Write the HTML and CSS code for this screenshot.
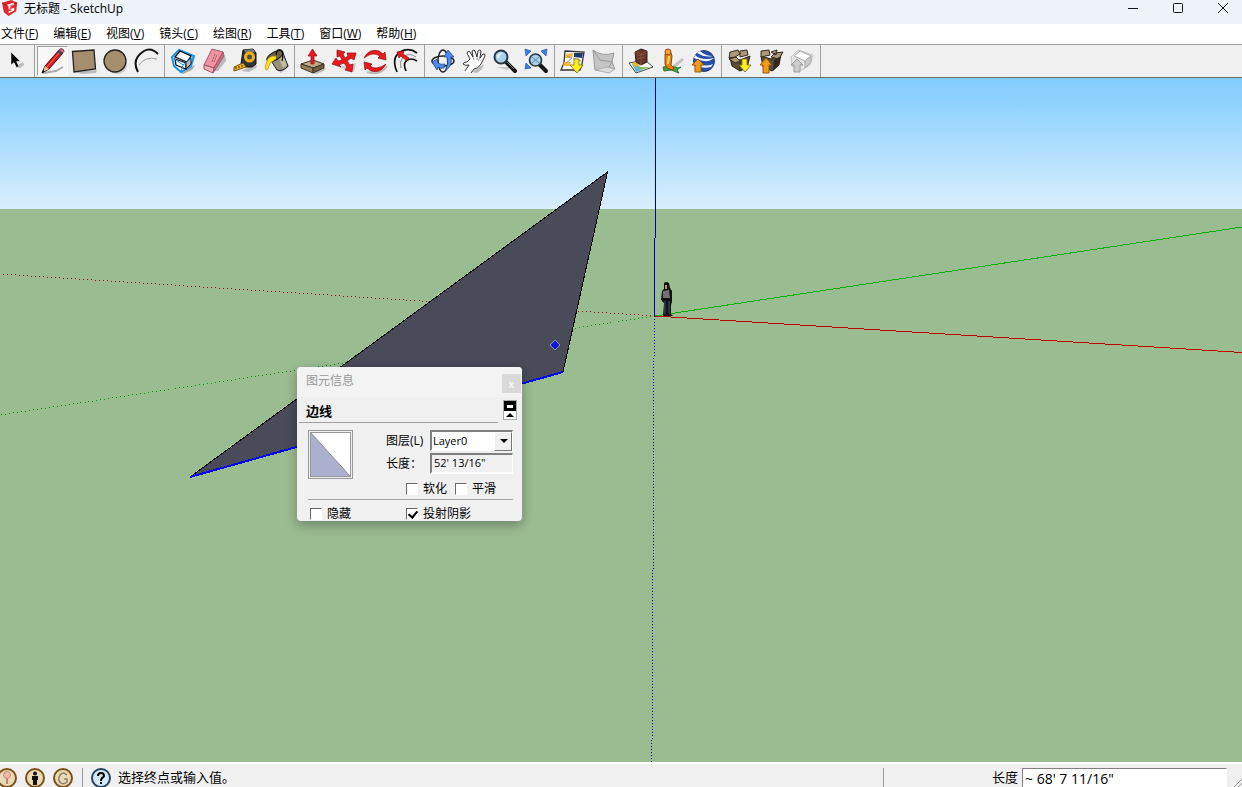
FILE: index.html
```html
<!DOCTYPE html>
<html lang="zh-CN">
<head>
    <meta charset="UTF-8">
    <meta name="viewport" content="width=device-width, initial-scale=1.0">
    <title>无标题 - SketchUp</title>
    <link rel="stylesheet" href="styles.css">
</head>
<body>
    <div class="app">
        <header class="title-bar">
            <svg class="logo" viewBox="0 0 18 18">
                <path d="M0 3L10 0L16 3L15 12L7 17L2 13Z" fill="#e5252a"/>
                <path d="M0 3L6 6L16 3" fill="none" stroke="#b80f18"/>
                <path d="M5 5L12 3L13 5L9 7V9L13 8V11L7 14V12L10 11V10L7 10V7Z" fill="#fff"/>
                <path d="M9 6L12 5M8 9L12 8" fill="none" stroke="#e5252a"/>
            </svg>
            <h1>无标题 - SketchUp</h1>
            <div class="window-buttons">
                <button aria-label="最小化"><svg viewBox="0 0 12 12"><path d="M1 6.5H11"/></svg></button>
                <button aria-label="最大化"><svg viewBox="0 0 12 12"><rect x="1.5" y="1.5" width="9" height="9" rx="1"/></svg></button>
                <button aria-label="关闭"><svg viewBox="0 0 12 12"><path d="M1 1L11 11M11 1L1 11"/></svg></button>
            </div>
        </header>

        <nav class="menu-bar">
            <button>文件(<u>F</u>)</button>
            <button>编辑(<u>E</u>)</button>
            <button>视图(<u>V</u>)</button>
            <button>镜头(<u>C</u>)</button>
            <button>绘图(<u>R</u>)</button>
            <button>工具(<u>T</u>)</button>
            <button>窗口(<u>W</u>)</button>
            <button>帮助(<u>H</u>)</button>
        </nav>

        <div class="toolbar">
            <div class="tool-group">
                <button aria-label="选择"><svg viewBox="0 0 28 28">
                    <path d="M13 20L21 15L22 18L18 21Z" fill="#bbb"/>
                    <path d="M9 5V18L12 15.500L14.500 20.500L17 19.500L14.500 14.500H18.500Z" fill="#000" stroke="#fff" stroke-width=".5"/>
                </svg></button>
            </div>
            <div class="tool-group">
                <button class="active" aria-label="线条"><svg viewBox="0 0 28 28">
                    <path d="M4 26L17 24L24 20" fill="none" stroke="#aaa" stroke-width="2"/>
                    <path d="M3 26L6 19L20 3L24 6L10 22Z" fill="#e3171b" stroke="#401010"/>
                    <path d="M6 19L10 22L4 25Z" fill="#e8c48e"/>
                    <path d="M8 20L21 5" stroke="#ff7770"/>
                    <path d="M18 5L22 8L23.500 6L20 3Z" fill="#446"/>
                    <path d="M20 3L22 1.500Q25 2 25 4.500L23.500 6Z" fill="#e86d91" stroke="#733"/>
                    <path d="M3 26L4 23L6 24.500Z" fill="#000"/>
                </svg></button>
                <button aria-label="矩形"><svg viewBox="0 0 28 28">
                    <path d="M5 25L27 23L26 26L12 27Z" fill="#bbb"/>
                    <path d="M2.500 4.500L24 3L25.500 22L4 25Z" fill="#a58e6e" stroke="#222" stroke-width="1.3"/>
                </svg></button>
                <button aria-label="圆"><svg viewBox="0 0 28 28">
                    <ellipse cx="16" cy="18" rx="10" ry="9" fill="#c8c8c8"/>
                    <circle cx="14" cy="14" r="11" fill="#a58e6e" stroke="#222" stroke-width="1.3"/>
                </svg></button>
                <button aria-label="圆弧"><svg viewBox="0 0 28 28">
                    <path d="M7 18Q13 9 25 12" fill="none" stroke="#999"/>
                    <path d="M6 25Q-1 12 12 4Q19 0 26 7" fill="none" stroke="#111" stroke-width="2"/>
                </svg></button>
            </div>
            <div class="tool-group">
                <button aria-label="制作组件"><svg viewBox="0 0 28 28">
                    <path d="M10 25L26 18L23 23L14 27Z" fill="#aaa"/>
                    <path d="M10 3L25 9L22 19L12 25L5 19L3 10Z" fill="#fff" stroke="#1692eb" stroke-width="2"/>
                    <path d="M6 10L11 4L22 9L18 15Z" fill="#fff" stroke="#111" stroke-width="1.300"/>
                    <path d="M6 12L17 16V22L7 18Z" fill="#fff" stroke="#111" stroke-width="1.300"/>
                    <path d="M17 16L22 11V17L17 22Z" fill="#bbb" stroke="#111"/>
                    <path d="M3 10L14 18L25 9M14 18L12 25" fill="none" stroke="#1692eb"/>
                </svg></button>
                <button aria-label="擦除"><svg viewBox="0 0 28 28">
                    <path d="M13 24L25 8L26 14L18 24Z" fill="#bbb"/>
                    <path d="M12 2L23 5L14 21L4 18Z" fill="#f193a0" stroke="#9c5762"/>
                    <path d="M4 18L14 21L13 26L4 22Z" fill="#f7b0b8" stroke="#9c5762"/>
                    <path d="M14 21L23 5L24 9L13 26Z" fill="#cf707f" stroke="#9c5762"/>
                    <path d="M15 7L12 15M17 8L14 15" stroke="#a85260" stroke-dasharray="2 1"/>
                </svg></button>
                <button aria-label="卷尺"><svg viewBox="0 0 28 28">
                    <path d="M10 24L25 17L26 20L18 25Z" fill="#bbb"/>
                    <path d="M12 3L22 2L25 6V17L21 20H12L10 17Z" fill="#333" stroke="#111"/>
                    <path d="M13 3L22 2L24 5L15 6Z" fill="#777"/>
                    <circle cx="18.500" cy="10" r="4" fill="#4d4d4d" stroke="#f5ae13" stroke-width="3"/>
                    <path d="M12 16L3 20V24L15 20Z" fill="#f9b91d" stroke="#745010"/>
                    <path d="M5 20V22M8 19V21M11 18V20" stroke="#222"/>
                </svg></button>
                <button aria-label="颜料桶"><svg viewBox="0 0 28 28">
                    <path d="M14 23L26 16L27 20L19 26Z" fill="#bbb"/>
                    <path d="M8 12L21 6L26 19Q21 25 15 23Z" fill="#989078" stroke="#222"/>
                    <path d="M20 7L25 18L21 21L16 9Z" fill="#c3bda7"/>
                    <ellipse cx="13" cy="9" rx="9" ry="4" transform="rotate(-28 13 9)" fill="#6c6246" stroke="#171717"/>
                    <path d="M14 9Q6 9 5 14L3 20Q4 25 6 22L8 16L14 12Z" fill="#ffe216" stroke="#a18713" stroke-width=".6"/>
                    <path d="M14 8Q15 1 19 3Q22 6 20 14" fill="none" stroke="#111" stroke-width="1.3"/>
                </svg></button>
            </div>
            <div class="tool-group">
                <button aria-label="推/拉"><svg viewBox="0 0 28 28">
                    <path d="M14 26L27 21L25 24L17 27Z" fill="#bbb"/>
                    <path d="M2 17L14 13L25 17L14 21Z" fill="#bda884" stroke="#3c3324"/>
                    <path d="M2 17V21L14 26V21Z" fill="#967f5c" stroke="#3c3324"/>
                    <path d="M14 21L25 17V21L14 26Z" fill="#6d5b41" stroke="#3c3324"/>
                    <path d="M13.500 2L18 9H15V17H12V9H9Z" fill="#ed171c" stroke="#8a1014" stroke-width=".7"/>
                </svg></button>
                <button aria-label="移动"><svg viewBox="0 0 28 28">
                    <path d="M9 20L26 16L24 25Z" fill="#c9c9c9"/>
                    <path d="M7 3L15 5L13 7L15 11L18 9L17 6L26 6L24 13L21 11L17 14L20 18L23 17L22 25L15 23L17 20L14 16L9 18L11 20L2 17L6 11L8 14L12 13L10 9L7 10Z" fill="#ed171c" stroke="#851014" stroke-width=".7"/>
                </svg></button>
                <button aria-label="旋转"><svg viewBox="0 0 28 28">
                    <path d="M6 25Q20 29 26 19" fill="none" stroke="#bbb" stroke-width="2"/>
                    <path d="M3 11Q8 1 18 4L22 7L24 5L25 13L17 11L19 9Q12 4 3 11ZM25 17Q20 27 10 24L6 21L4 23L3 15L11 17L9 19Q15 24 25 17Z" fill="#ed171c" stroke="#851014" stroke-width=".7"/>
                </svg></button>
                <button aria-label="偏移"><svg viewBox="0 0 28 28">
                    <path d="M5 25Q-1 11 8 5Q17 0 25 6M14 24Q11 17 14 14Q19 10 25 14" fill="none" stroke="#111" stroke-width="1.700"/>
                    <path d="M9 21Q7 15 11 10Q17 5 24 10" fill="none" stroke="#888"/>
                    <path d="M5 5L12 4L11 7L17 11L15 14L9 9L7 11Z" fill="#ed171c" stroke="#851014" stroke-width=".7"/>
                </svg></button>
            </div>
            <div class="tool-group">
                <button aria-label="环绕观察"><svg viewBox="0 0 28 28">
                    <ellipse cx="14" cy="14" rx="11" ry="5" fill="none" stroke="#222" stroke-width="1.500"/>
                    <ellipse cx="14" cy="14" rx="5" ry="11" fill="none" stroke="#222" stroke-width="1.500"/>
                    <path d="M3 15L8 12L9 16Q12 18 16 17L15 21Q11 22 9 20L8 23ZM19 3L25 10L22 10Q24 19 16 24Q20 17 18 10L15 10Z" fill="#4b8cf0" stroke="#183b80" stroke-width=".7"/>
                </svg></button>
                <button aria-label="平移"><svg viewBox="0 0 28 28">
                    <path d="M12 25L24 17L22 22L17 26Z" fill="#bbb"/>
                    <path d="M5 24L9 18Q5 19 3 17Q3 15 7 15L10 12L7 6Q8 3 10 5L13 10L12 4Q14 2 15 4L17 10L18 4Q20 2 21 4L20 11L23 7Q25 6 25 9L21 17Q18 22 14 22L11 26" fill="#fff" stroke="#333"/>
                    <path d="M13 10L14 13M17 10V13M20 11L18 14" stroke="#999"/>
                </svg></button>
                <button aria-label="缩放"><svg viewBox="0 0 28 28">
                    <path d="M5 20L20 20L17 23Z" fill="#c8c8c8"/>
                    <path d="M15 15L24 24" stroke="#171717" stroke-width="4" stroke-linecap="round"/>
                    <path d="M16 15L23 22" stroke="#777"/>
                    <circle cx="10" cy="10" r="6.500" fill="#a9d1eb" stroke="#273845" stroke-width="2"/>
                    <path d="M6 9Q8 5 12 6Q9 8 7 12Z" fill="#e3f5ff"/>
                </svg></button>
                <button aria-label="充满视窗"><svg viewBox="0 0 28 28">
                    <path d="M3 2L9 4L4 9ZM25 2L19 4L24 9ZM3 22L4 16L9 21Z" fill="#397ee8" stroke="#2458ad" stroke-width=".7"/>
                    <path d="M18 18L24 24" stroke="#171717" stroke-width="4" stroke-linecap="round"/>
                    <circle cx="13.500" cy="13" r="6" fill="#a9d1eb" stroke="#273845" stroke-width="1.700"/>
                    <path d="M10 10L17 16M17 10L10 16" stroke="#6588a0"/>
                </svg></button>
            </div>
            <div class="tool-group">
                <button aria-label="添加位置"><svg viewBox="0 0 28 28">
                    <path d="M6 4L25 5L23 17L21 23L2 23L5 16Z" fill="#fff" stroke="#333" stroke-width="1.300"/>
                    <path d="M7 7L14 6L13 11L6 11ZM5 15L12 15L11 19L4 19Z" fill="#f1b936"/>
                    <path d="M15 6L24 6L23 11L15 10Z" fill="#1b3870"/>
                    <path d="M8 9L13 11L7 16M14 11L22 14" fill="none" stroke="#9b9b9b"/>
                    <path d="M15 12H20V18H24L18 26L11 18H15Z" fill="#fff01b" stroke="#756b10" stroke-width=".8"/>
                </svg></button>
                <button aria-label="切换地形"><svg viewBox="0 0 28 28">
                    <path d="M3 3Q12 10 24 6L22 15L25 22L5 23Z" fill="#c5c5c5" stroke="#999"/>
                    <path d="M3 3L10 13L22 15L17 23L5 23" fill="none" stroke="#999"/>
                    <path d="M5 23L17 20L25 22L19 26Z" fill="#ddd" stroke="#aaa"/>
                </svg></button>
            </div>
            <div class="tool-group">
                <button aria-label="照片纹理"><svg viewBox="0 0 28 28">
                    <path d="M2 16L18 13L26 20L9 26Z" fill="#f8f8f8" stroke="#444"/>
                    <path d="M5 17L10 16L15 23L9 25Z" fill="#55b6d9"/>
                    <path d="M12 20L23 20L14 23Z" fill="#8bc33f"/>
                    <path d="M5 16L10 15L13 19L7 20Z" fill="#e3b632"/>
                    <path d="M8 5L14 2L20 4V15L14 18L9 15Z" fill="#673429" stroke="#372018"/>
                    <path d="M8 5L14 7L20 4M14 7V18M10 9L18 7M10 12L18 10" fill="none" stroke="#85503f"/>
                </svg></button>
                <button aria-label="街景"><svg viewBox="0 0 28 28">
                    <path d="M14 19L24 11L26 13L17 21Z" fill="#c2c2c2"/>
                    <path d="M5 20L13 19L20 21L23 20L19 23L21 26L13 23L6 24Z" fill="#45a23e" stroke="#2d7530"/>
                    <path d="M7 7L13 6L14 9L13 18L16 21L15 23L9 21L7 17Z" fill="#e7840e" stroke="#8d480a"/>
                    <circle cx="10" cy="5" r="3" fill="#f5a433" stroke="#8d480a"/>
                    <path d="M11 9L10 17" stroke="#ffd074" stroke-width="2"/>
                </svg></button>
                <button aria-label="在地球中预览"><svg viewBox="0 0 28 28">
                    <circle cx="15" cy="14" r="10.500" fill="#254fa8" stroke="#234179"/>
                    <path d="M6 8Q12 14 25 11Q20 16 10 13L5 11ZM11 4Q16 9 24 9Q16 11 8 6ZM6 15Q15 21 24 17L22 20Q13 22 6 18Z" fill="#eff6ff"/>
                    <path d="M9 12L15 18H12V25H6V18H3Z" fill="#f49915" stroke="#905b13"/>
                </svg></button>
            </div>
            <div class="tool-group">
                <button aria-label="获取模型"><svg viewBox="0 0 28 28">
                    <path d="M4 11L14 13L24 9L21 21L14 24L6 19Z" fill="#5b4c37" stroke="#28231b"/>
                    <path d="M4 5L12 3L14 7L9 10L3 11ZM14 4L21 3L22 8L14 10ZM3 12L10 10L14 14L9 16Z" fill="#ae9877" stroke="#332b20"/>
                    <path d="M14 14V24" stroke="#332b20"/>
                    <path d="M16 12H21V18H25L19 25L13 18H16Z" fill="#fff01b" stroke="#756b10" stroke-width=".8"/>
                </svg></button>
                <button aria-label="分享模型"><svg viewBox="0 0 28 28">
                    <path d="M4 9L14 12L24 7L22 18L15 24L6 20Z" fill="#5b4c37" stroke="#28231b"/>
                    <path d="M4 4L12 3L13 8L4 10ZM14 10L18 6L26 5L22 12ZM14 5L20 3L19 8Z" fill="#ae9877" stroke="#332b20"/>
                    <path d="M17 13L24 9L21 19L16 24Z" fill="#2f281f"/>
                    <path d="M9 11L15 18H12V26H6V18H3Z" fill="#f49915" stroke="#905b13"/>
                </svg></button>
                <button aria-label="分享组件" disabled><svg viewBox="0 0 28 28">
                    <path d="M10 3L25 8L22 18L14 23L4 19L3 10Z" fill="#e4e4e4" stroke="#c4c4c4"/>
                    <path d="M6 9L12 4L23 9L17 14Z" fill="#fff" stroke="#aaa"/>
                    <path d="M17 14L23 9V15L17 21Z" fill="#ccc" stroke="#aaa"/>
                    <path d="M9 12L15 18H12V25H6V18H3Z" fill="#ccc" stroke="#999"/>
                </svg></button>
            </div>
        </div>

        <main class="viewport">
            <svg class="scene" viewBox="0 78 1242 684" preserveAspectRatio="xMidYMid slice">
                <defs>
                    <linearGradient id="sky" x1="0" y1="0" x2="0" y2="1">
                        <stop offset="0" stop-color="#7fccff"/>
                        <stop offset="1" stop-color="#d8effd"/>
                    </linearGradient>
                </defs>
                <rect y="78" width="1242" height="131" fill="url(#sky)"/>
                <rect y="209" width="1242" height="553" fill="#9abc91"/>
                <g fill="none" shape-rendering="crispEdges">
                    <path d="M655 316L0 274" stroke="#a01010" stroke-dasharray="1 3"/>
                    <path d="M655 316L0 415" stroke="#009a00" stroke-dasharray="1 3"/>
                    <path d="M654.500 316L653.500 400" stroke="#0000c8" stroke-dasharray="1 2"/>
                    <path d="M653.500 400V570" stroke="#00007a" stroke-dasharray="1 2"/>
                    <path d="M652.500 570V740" stroke="#0000c8" stroke-dasharray="1 2"/>
                    <path d="M651.500 740V762" stroke="#00007a" stroke-dasharray="1 2"/>
                    <path d="M655.500 78V238" stroke="#0000a0"/>
                    <path d="M654.500 238V316" stroke="#0000c0"/>
                    <path d="M655 316L1242 227" stroke="#00b000"/>
                    <path d="M655 316L1242 352.500" stroke="#c00000"/>
                </g>
                <g shape-rendering="crispEdges">
                    <path d="M607.500 172L563 372L190 477Z" fill="#4a4b59" stroke="#000"/>
                    <path d="M190 477L563 372" stroke="#0000ff" stroke-width="2"/>
                </g>
                <path d="M555 340L560 345L555 350L550 345Z" fill="#1515cf" stroke="#8b93bf"/>
                <!-- scale figure -->
                <g>
                    <path d="M664 283Q666 281 669 283L670 288L672 291V302L671 305V314L673 316H663L664 303L661 300L662 291L664 289Z" fill="#111"/>
                    <path d="M663 291L669 290L670 298H663Z" fill="#737373"/>
                    <path d="M665 301V314M669 301V314" stroke="#25344b" stroke-width="2"/>
                    <path d="M665 285H667V289H665ZM661 300H662V302H661Z" fill="#b88b72"/>
                </g>
            </svg>

            <section class="panel">
                <div class="panel-title">
                    <h2>图元信息</h2>
                    <button class="panel-close" aria-label="关闭">x</button>
                </div>
                <div class="panel-header">
                    <h3>边线</h3>
                    <button class="panel-toggle" aria-label="隐藏详细信息"><svg viewBox="0 0 12 18">
                        <rect width="12" height="10" fill="#000"/>
                        <rect x="3" y="4" width="6" height="3" fill="#fff"/>
                        <path d="M2 16H10L6 12Z" fill="#000"/>
                    </svg></button>
                </div>
                <div class="panel-body">
                    <div class="entity">
                        <button class="swatch" aria-label="材质"><svg viewBox="0 0 39 43" preserveAspectRatio="none">
                            <rect width="39" height="43" fill="#fff"/>
                            <path d="M0 0L39 43H0Z" fill="#abb0cf"/>
                            <path d="M0 0L39 43" stroke="#8c8c94"/>
                        </svg></button>
                        <div class="fields">
                            <div class="field">
                                <label for="layer">图层(L)</label>
                                <div class="select-box">
                                    <select id="layer"><option>Layer0</option></select>
                                </div>
                            </div>
                            <div class="field">
                                <label for="length">长度：</label>
                                <input type="text" id="length" value="52' 13/16&quot;" readonly>
                            </div>
                        </div>
                    </div>
                    <div class="checks">
                        <label class="second"><input type="checkbox">软化</label>
                        <label><input type="checkbox">平滑</label>
                    </div>
                    <div class="checks visibility">
                        <label class="first"><input type="checkbox">隐藏</label>
                        <label><input type="checkbox" checked>投射阴影</label>
                    </div>
                </div>
            </section>
        </main>

        <footer class="status-bar">
            <div class="status-icons">
                <button aria-label="地理位置"><svg viewBox="0 0 20 20">
                    <circle cx="10" cy="10" r="9" fill="#ead9b4" stroke="#7c5118" stroke-width="2"/>
                    <circle cx="10" cy="7" r="3.500" fill="#f3b5a8" stroke="#c88c7c"/>
                    <path d="M10 10V16" stroke="#b78674" stroke-width="2"/>
                </svg></button>
                <button aria-label="归属"><svg viewBox="0 0 20 20">
                    <circle cx="10" cy="10" r="9" fill="#ead9b4" stroke="#7c5118" stroke-width="2"/>
                    <circle cx="10" cy="5.500" r="2" fill="#111"/>
                    <path d="M7 8H13V12H12V17H8V12H7Z" fill="#111"/>
                </svg></button>
                <button aria-label="登录"><svg viewBox="0 0 20 20">
                    <circle cx="10" cy="10" r="9" fill="#ead9b4" stroke="#7c5118" stroke-width="2"/>
                    <path d="M14 7Q10 3 7 7Q4 12 8 15Q11 17 14 14V11H11" fill="none" stroke="#8c8066" stroke-width="1.500"/>
                </svg></button>
            </div>
            <div class="status-message">
                <button class="help" aria-label="帮助"><svg viewBox="0 0 20 20">
                    <circle cx="10" cy="10" r="9" fill="#d5e9f8" stroke="#24435f" stroke-width="2"/>
                    <path d="M7 8Q7 5 10 5Q13 5 13 8Q13 9 11 10Q10 11 10 13" fill="none" stroke="#000" stroke-width="2"/>
                    <rect x="9" y="14" width="2" height="2"/>
                </svg></button>
                <span>选择终点或输入值。</span>
            </div>
            <div class="measurement">
                <label for="measure">长度</label>
                <input type="text" id="measure" value="~ 68' 7 11/16&quot;">
                <svg class="grip" viewBox="0 0 15 21"><path d="M5 21L15 11M9 21L15 15M13 21L15 19" stroke="#999"/></svg>
            </div>
        </footer>
    </div>
</body>
</html>
```

FILE: styles.css
```css
* {
    box-sizing: border-box;
}
body {
    margin: 0;
    font-family: "Open Sans", "Noto Sans CJK SC", sans-serif;
    font-size: 12px;
    line-height: 16px;
    color: #000;
}
button {
    padding: 0;
    border: none;
    background: none;
    font: inherit;
    color: inherit;
}
svg {
    display: block;
}
h1, h2, h3 {
    margin: 0;
    font-size: 12px;
    font-weight: normal;
}
.app {
    display: flex;
    flex-direction: column;
    height: 100vh;
    overflow: hidden;
    background-color: #f0f0f0;
}

/* title bar and menu */
.title-bar {
    display: flex;
    flex: none;
    height: 24px;
    padding-left: 2px;
    background-color: #eef3fa;
}
.title-bar h1 {
    padding-top: 1px;
}
.logo {
    width: 17px;
    height: 17px;
    margin-right: 5px;
}
.window-buttons {
    display: flex;
    align-items: flex-start;
    margin-left: auto;
}
.window-buttons button {
    display: flex;
    justify-content: center;
    width: 45px;
    padding-top: 2px;
    padding-left: 7px;
}
.window-buttons svg {
    width: 12px;
    height: 12px;
    fill: none;
    stroke: #111;
}
.menu-bar {
    display: flex;
    flex: none;
    gap: 15px;
    height: 20px;
    padding-left: 1px;
    background-color: #fff;
}
.menu-bar button {
    white-space: nowrap;
}

/* toolbar */
.toolbar {
    display: flex;
    flex: none;
    height: 34px;
    border-top: 1px solid #a0a0a0;
    border-bottom: 1px solid #696969;
    background-color: #f0f0f0;
}
.tool-group {
    display: flex;
    align-items: center;
    padding: 0 3px;
    border-right: 1px solid #a0a0a0;
    margin-right: -1px;
}
.tool-group:first-child {
    padding-left: 0;
}
.tool-group button {
    display: flex;
    align-items: center;
    justify-content: center;
    width: 31px;
    height: 30px;
}
.tool-group svg {
    flex: none;
    width: 28px;
    height: 28px;
}
.tool-group .active {
    border: 1px solid #a0a0a0;
    border-right-color: #fff;
    border-bottom-color: #fff;
    background-color: #f8f8f8;
}

/* drawing area */
.viewport {
    position: relative;
    flex: 1;
    min-height: 0;
    overflow: hidden;
}
.scene {
    width: 100%;
    height: 100%;
}

/* entity info window */
.panel {
    position: absolute;
    left: 297px;
    top: 289px;
    width: 225px;
    height: 154px;
    overflow: hidden;
    border-radius: 4px;
    background-color: #f0f0f0;
    box-shadow: 0 4px 12px rgba(0,0,0,0.3);
}
.panel-title {
    display: flex;
    justify-content: space-between;
    height: 30px;
    padding: 6px 1px 0 9px;
    background-color: #f3f3f3;
    color: #999;
}
.panel-close {
    width: 19px;
    height: 19px;
    margin-top: 1px;
    background-color: #d9d9d9;
    color: #f4f4f4;
    font-size: 10px;
    font-weight: bold;
}
.panel-header {
    display: flex;
    justify-content: space-between;
    padding: 3px 5px 3px 9px;
}
.panel h3 {
    padding-top: 3px;
    font-size: 13px;
    font-weight: bold;
}
.panel-toggle {
    width: 14px;
    height: 20px;
    border: 1px solid #aaa;
    background-color: #fff;
}
.panel-toggle svg {
    width: 100%;
    height: 100%;
}
.panel-header::after {
    content: "";
    position: absolute;
    top: 55px;
    left: 2px;
    right: 24px;
    border-top: 1px solid #a0a0a0;
}
.panel-body {
    padding: 7px 9px 0 11px;
}
.entity {
    display: flex;
    justify-content: space-between;
}
.swatch {
    width: 45px;
    height: 49px;
    padding: 1px;
    border: 1px solid #999;
    background-color: #eee;
}
.swatch svg {
    width: 100%;
    height: 100%;
    border: 1px solid #999;
}
.fields {
    display: flex;
    flex-direction: column;
    gap: 2px;
}
.field {
    display: flex;
    align-items: center;
    gap: 5px;
}
.field label {
    width: 39px;
    white-space: nowrap;
}
.field input, .select-box {
    width: 83px;
    height: 21px;
    border: 2px solid;
    border-color: #808080 #fff #fff #808080;
    border-right-width: 1px;
}
.field input {
    padding: 0 0 2px 2px;
    background-color: #f0f0f0;
    font: 11px "Open Sans", sans-serif;
    outline: none;
}
.select-box {
    position: relative;
    background-color: #fff;
}
.select-box select {
    width: 100%;
    height: 100%;
    padding: 0 0 0 1px;
    border: none;
    appearance: none;
    background: none;
    color: #000;
    font: 11px "Open Sans", sans-serif;
}
.select-box::before {
    content: "";
    position: absolute;
    top: 0;
    right: 0;
    width: 16px;
    height: 17px;
    border: 1px solid;
    border-color: #fff #777 #777 #fff;
    background-color: #f0f0f0;
}
.select-box::after {
    content: "";
    position: absolute;
    top: 7px;
    right: 4px;
    border: 4px solid transparent;
    border-top-color: #000;
    border-bottom: none;
}
.checks {
    display: flex;
    padding-top: 2px;
}
.checks label {
    display: flex;
    align-items: center;
    gap: 5px;
    width: 49px;
    white-space: nowrap;
}
.checks .second {
    margin-left: 98px;
}
.checks .first {
    width: 98px;
    padding-left: 2px;
}
.checks.visibility {
    margin-top: 2px;
    padding-top: 6px;
    border-top: 1px solid #a0a0a0;
}
.checks input {
    position: relative;
    flex: none;
    width: 12px;
    height: 12px;
    margin: 0;
    appearance: none;
    border: 1px solid;
    border-color: #696969 #fff #fff #696969;
    background-color: #fff;
}
.checks input:checked::after {
    content: "";
    position: absolute;
    left: 3px;
    top: 0;
    width: 4px;
    height: 7px;
    border: solid #000;
    border-width: 0 2px 2px 0;
    transform: rotate(40deg);
}

/* status bar */
.status-bar {
    display: flex;
    flex: none;
    height: 25px;
    padding-top: 4px;
    border-top: 2px solid #fff;
    overflow: hidden;
    font-size: 13px;
    line-height: 19px;
}
.status-icons {
    display: flex;
    gap: 8px;
    margin-left: -3px;
    padding-right: 9px;
    border-right: 1px solid #999;
}
.status-bar button svg {
    width: 20px;
    height: 20px;
}
.status-message {
    display: flex;
    flex: 1;
    gap: 7px;
    padding-left: 8px;
    white-space: nowrap;
}
.help {
    flex: none;
}
.measurement {
    display: flex;
    flex: none;
    align-items: flex-start;
    justify-content: flex-end;
    width: 359px;
    border-left: 1px solid #999;
}
.measurement input {
    width: 205px;
    height: 19px;
    margin-left: 4px;
    padding: 0 2px;
    border: 1px solid;
    border-color: #808080 #fff #fff #808080;
    border-bottom: none;
    font: 14px/18px "Open Sans", sans-serif;
    outline: none;
}
.grip {
    width: 15px;
    height: 21px;
}
```
